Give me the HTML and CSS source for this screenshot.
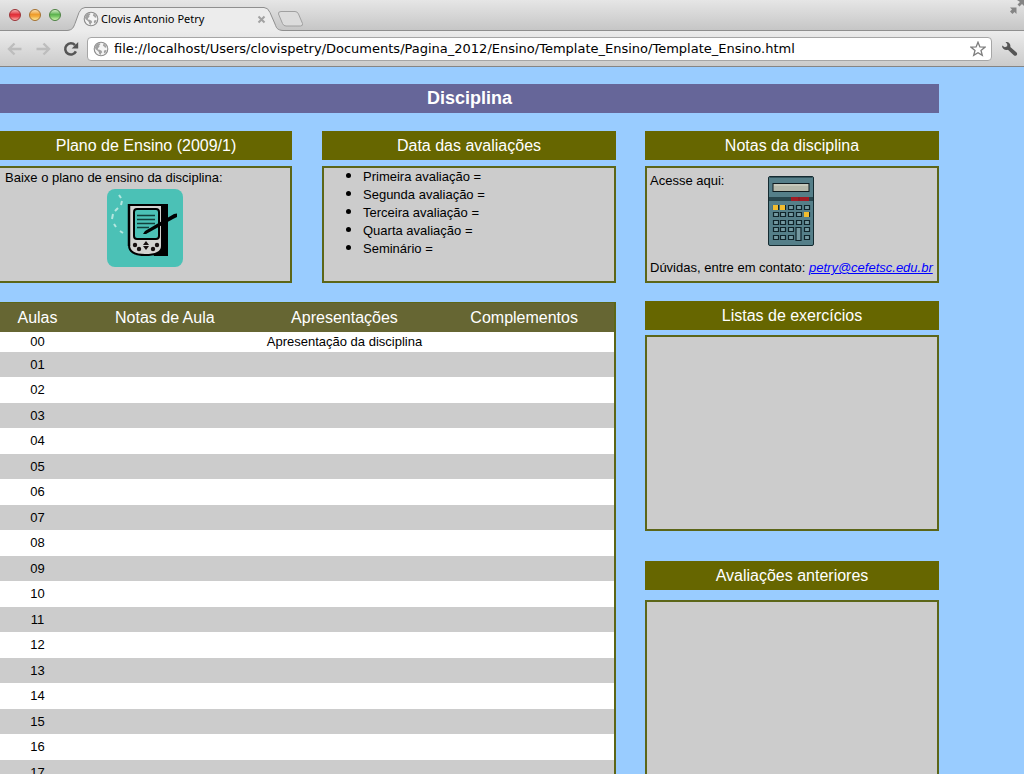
FILE: index.html
```html
<!DOCTYPE html>
<html lang="pt-BR">
<head>
<meta charset="utf-8">
<title>Clovis Antonio Petry</title>
<link rel="stylesheet" href="styles.css">
</head>
<body>
<svg class="defs" aria-hidden="true">
  <symbol id="globe" viewBox="0 0 16 16">
    <circle cx="8" cy="8" r="6.800" fill="#f4f4f4" stroke="#8c8c8c" stroke-width="1.100"/>
    <path d="M3.200 3.800 5.400 2.200l2 .3-.4 1.600-1 .5.500 1.100-1.400 1.200-.3 1.500 1.800.3 2 1 .6 1.500-1.200 1.200-.4 1.700-1.300-1.200-.5-2-1.500-1.300-1.800-1.300-.6-2zM9.800 2.400l2 .9 1.700 2.200-.2 1.300-1.500-.2-.6-1.200-1.400-.7.600-1zM11.400 9.200l2.300-.3-1 2.500-1.600 1.200-.3-1.800z" fill="#a2a2a2"/>
  </symbol>
</svg>
<div class="window">
  <header class="browser">
    <div class="tabstrip">
      <div class="lights">
        <button class="light red" aria-label="Fechar"></button>
        <button class="light amber" aria-label="Minimizar"></button>
        <button class="light green" aria-label="Ampliar"></button>
      </div>
      <div class="tab">
        <svg class="tab-shape" viewBox="0 0 216 24" aria-hidden="true"><path d="M0 23.500C6 23 6.500 20 8 16.500L12 5.500Q14 .5 18 .5H197Q201 .5 203 5.500L208 17C209.500 21 210 23 216 23.500V24H0z" fill="#ececec"/><path d="M0 23.500C6 23 6.500 20 8 16.500L12 5.500Q14 .5 18 .5H197Q201 .5 203 5.500L208 17C209.500 21 210 23 216 23.500" fill="none" stroke="#8f8f8f"/></svg>
        <svg class="favicon" aria-hidden="true"><use href="#globe"/></svg>
        <span class="tab-title">Clovis Antonio Petry</span>
        <button class="tab-close" aria-label="Fechar aba"><svg width="9" height="9" viewBox="0 0 9 9"><path d="m1.500 1.500 6 6m0-6-6 6" stroke="#a2a2a2" stroke-width="2"/></svg></button>
      </div>
      <button class="new-tab" aria-label="Nova aba"><svg width="28" height="18" viewBox="0 0 28 18"><path d="M4 1.500H18Q20.500 1.500 21.500 4L25.500 13.500Q26 16 23.500 16H9Q6.500 16 5.500 13.500L1.500 4Q1 1.500 4 1.500z" fill="#dcdcdc" stroke="#a0a0a0"/></svg></button>
      <button class="fullscreen" aria-label="Tela cheia"><svg width="15" height="15" viewBox="0 0 15 15"><path d="M8 0h7v6l-2-2-2.500 2.500-2-2L11 2zM1 7.500h6.500V14l-2-2-2 2L1 11.500l2-2z" fill="#858585"/></svg></button>
    </div>
    <div class="toolbar">
      <button class="tool" aria-label="Voltar"><svg width="16" height="14" viewBox="0 0 16 14"><path d="M7.500 1.500 2 7l5.500 5.500M2 7h12.500" fill="none" stroke="#bdbdbd" stroke-width="2.400"/></svg></button>
      <button class="tool" aria-label="Avançar"><svg width="16" height="14" viewBox="0 0 16 14"><path d="M8.500 1.500 14 7l-5.500 5.500M14 7H1.500" fill="none" stroke="#bdbdbd" stroke-width="2.400"/></svg></button>
      <button class="tool" aria-label="Recarregar"><svg width="16" height="16" viewBox="0 0 16 16"><path d="M12 4.200A5.600 5.600 0 1 0 12.900 10.400" fill="none" stroke="#555" stroke-width="2.500"/><path d="M15.200 1v6.500H8.700z" fill="#555"/></svg></button>
      <div class="address">
        <svg class="site" aria-hidden="true"><use href="#globe"/></svg>
        <input class="url" type="text" aria-label="Endereço" value="file://localhost/Users/clovispetry/Documents/Pagina_2012/Ensino/Template_Ensino/Template_Ensino.html">
        <button class="star" aria-label="Favorito"><svg width="16" height="16" viewBox="0 0 16 16"><path d="m8 1.200 1.900 4.700 5 .3-3.900 3.200 1.300 5L8 11.700l-4.300 2.700 1.300-5L1.100 6.200l5-.3z" fill="#fff" stroke="#7d7d7d" stroke-width="1.300"/></svg></button>
      </div>
      <button class="wrench" aria-label="Ferramentas"><svg width="17" height="16" viewBox="0 0 17 16"><path d="M4.500 1C7.800.3 10 3 9.300 6L15.600 11.600C17.200 13.300 14.900 15.800 13.100 14.400L6.900 8.700C4 9.600.9 7.600 1 4.500L3.900 6.200 6.200 5.200 6.200 3z" fill="#555"/></svg></button>
    </div>
  </header>

  <main class="page">
    <h1 class="title">Disciplina</h1>
    <div class="columns">
      <div class="primary">
        <div class="pair">
          <section>
            <h2 class="heading">Plano de Ensino (2009/1)</h2>
            <div class="box plan">
              <p>Baixe o plano de ensino da disciplina:</p>
              <a class="pda" href="#plano" aria-label="Plano de ensino"><svg width="76" height="78" viewBox="0 0 76 78">
                <rect width="76" height="78" rx="8" fill="#4bc1b6"/>
                <path d="M12 6l2 3M15 12l-1 4M11 19l-3 3M6 25l-1 5M7 35l2 3M13 42l3 2" stroke="#b5e6df" stroke-width="2"/>
                <path d="M27 15h34v52H47z" fill="#000"/>
                <path d="M22 16h33v41q0 9-17 9-16 0-16-10z" fill="#d3d3d0" stroke="#000" stroke-width="2"/>
                <path d="M22 15v42" stroke="#000" stroke-width="2.500"/>
                <rect x="27" y="20" width="25" height="30" rx="3" fill="#4bc1b6" stroke="#000" stroke-width="2"/>
                <path d="M30 26.500h18M30 30.500h18M30 34.500h18M30 38.500h12" stroke="#123f3b" stroke-width="1.500"/>
                <path d="M36 45 38 42 67 25l3-.5v3.500L66 30 39 45z" fill="#000"/>
                <g fill="#171010"><circle cx="28" cy="56" r="2.200"/><circle cx="32" cy="60" r="2.200"/><circle cx="46" cy="60" r="2.200"/><circle cx="50" cy="56" r="2.200"/><path d="m39 52 3 4h-6zm0 9 3-4h-6z"/></g>
              </svg></a>
            </div>
          </section>
          <section>
            <h2 class="heading">Data das avaliações</h2>
            <div class="box">
              <ul class="dates">
                <li>Primeira avaliação =</li>
                <li>Segunda avaliação =</li>
                <li>Terceira avaliação =</li>
                <li>Quarta avaliação =</li>
                <li>Seminário =</li>
              </ul>
            </div>
          </section>
        </div>
        <table class="lessons">
          <thead><tr><th class="num">Aulas</th><th>Notas de Aula</th><th>Apresentações</th><th>Complementos</th></tr></thead>
          <tbody>
            <tr class="first"><td>00</td><td></td><td>Apresentação da disciplina</td><td></td></tr>
            <tr><td>01</td><td></td><td></td><td></td></tr>
            <tr><td>02</td><td></td><td></td><td></td></tr>
            <tr><td>03</td><td></td><td></td><td></td></tr>
            <tr><td>04</td><td></td><td></td><td></td></tr>
            <tr><td>05</td><td></td><td></td><td></td></tr>
            <tr><td>06</td><td></td><td></td><td></td></tr>
            <tr><td>07</td><td></td><td></td><td></td></tr>
            <tr><td>08</td><td></td><td></td><td></td></tr>
            <tr><td>09</td><td></td><td></td><td></td></tr>
            <tr><td>10</td><td></td><td></td><td></td></tr>
            <tr><td>11</td><td></td><td></td><td></td></tr>
            <tr><td>12</td><td></td><td></td><td></td></tr>
            <tr><td>13</td><td></td><td></td><td></td></tr>
            <tr><td>14</td><td></td><td></td><td></td></tr>
            <tr><td>15</td><td></td><td></td><td></td></tr>
            <tr><td>16</td><td></td><td></td><td></td></tr>
            <tr><td>17</td><td></td><td></td><td></td></tr>
          </tbody>
        </table>
      </div>
      <aside class="side">
        <section>
          <h2 class="heading">Notas da disciplina</h2>
          <div class="box grades">
            <div class="access">
              <p>Acesse aqui:</p>
              <a class="calc" href="#notas" aria-label="Notas"><svg width="46" height="70" viewBox="0 0 46 70">
                <rect x=".5" y=".5" width="45" height="69" rx="1.500" fill="#557f89" stroke="#142a30"/>
                <path d="M2 1.500h42" stroke="#34545c"/>
                <rect x="5" y="7.500" width="36" height="8" fill="#b5b9ab" stroke="#101c20"/><path d="M6 9h34" stroke="#d7d9cc"/>
                <path d="M1 21h22v4H1z" fill="#28464d"/><path d="M23 21h18v4H23z" fill="#a01c25"/><path d="M31 21v4" stroke="#6d2229"/><path d="M41 21h4v4h-4z" fill="#28464d"/>
                <g fill="#7499a1" stroke="#10242a" stroke-width="1.200">
                  <path d="M5.500 29.500h5v4h-5zM12.500 29.500h5v4h-5zM20.500 29.500h5v4h-5zM28.500 29.500h5v4h-5zM36.500 29.500h5v4h-5z"/>
                  <path d="M5.500 36.500h5v4h-5zM12.500 36.500h5v4h-5zM20.500 36.500h5v4h-5zM28.500 36.500h5v4h-5zM36.500 36.500h5v4h-5z"/>
                  <path d="M5.500 44.500h5v4h-5zM12.500 44.500h5v4h-5zM20.500 44.500h5v4h-5zM28.500 44.500h5v4h-5zM36.500 44.500h5v4h-5z"/>
                  <path d="M5.500 51.500h5v4h-5zM12.500 51.500h5v4h-5zM20.500 51.500h5v4h-5zM28 51.500h5v13h-5zM36.500 51.500h5v4h-5z"/>
                  <path d="M5.500 59.500h5v4h-5zM12.500 59.500h5v4h-5zM20.500 59.500h5v4h-5zM36.500 59.500h5v4h-5z"/>
                </g>
                <path d="M5 29h5v5H5zM12 29h5v5h-5zM36 36h5v5h-5z" fill="#f2bd2e"/>
              </svg></a>
            </div>
            <p>Dúvidas, entre em contato: <a class="mail" href="mailto:petry@cefetsc.edu.br">petry@cefetsc.edu.br</a></p>
          </div>
        </section>
        <section>
          <h2 class="heading">Listas de exercícios</h2>
          <div class="box lists"></div>
        </section>
        <section class="previous">
          <h2 class="heading">Avaliações anteriores</h2>
          <div class="box exams"></div>
        </section>
      </aside>
    </div>
  </main>
</div>
</body>
</html>
```
FILE: styles.css
```css
* { box-sizing: border-box; }
body { margin: 0; background: #99ccff; font-family: "Liberation Sans", Arial, sans-serif; font-size: 13px; line-height: 18px; color: #000; }
h1, h2, p, ul { margin: 0; padding: 0; }
button { margin: 0; padding: 0; border: 0; background: none; }
svg { display: block; }
.defs { display: none; }
.window { display: flex; flex-direction: column; height: 100vh; overflow: hidden; }

.browser { flex: none; font-family: "Noto Sans", "Lucida Grande", sans-serif; }
.tabstrip { display: flex; align-items: flex-start; height: 31px; background: linear-gradient(#e6e6e6, #c6c6c6); border-bottom: 1px solid #8f8f8f; }
.lights { display: flex; gap: 8px; padding: 9px 0 0 9px; width: 67px; }
.light { width: 12px; height: 12px; border-radius: 50%; border: 1px solid #777; }
.red { background: linear-gradient(#f5b0b0, #e0303a 45%, #e8434a 65%, #ffb0ac); border-color: #9b3034; }
.amber { background: linear-gradient(#fbe0b0, #ee9c2c 45%, #f3ae40 65%, #ffeb9a); border-color: #a5702d; }
.green { background: linear-gradient(#d5efc8, #5db350 45%, #79c766 65%, #d0f8ae); border-color: #4b8040; }
.tab { position: relative; display: flex; align-items: center; width: 216px; height: 24px; margin-top: 7px; padding: 0 17px 0 16px; font-size: 11px; }
.tab-shape { position: absolute; left: 0; top: 0; width: 216px; height: 24px; }
.favicon { position: relative; width: 16px; height: 16px; margin-right: 2px; }
.tab-title { position: relative; flex: 1; white-space: nowrap; }
.tab-close { position: relative; }
.new-tab { margin-top: 10px; margin-left: -6px; }
.fullscreen { margin-left: auto; }
.toolbar { display: flex; align-items: center; height: 36px; padding: 0 6px 0 7px; background: linear-gradient(#ececec, #cbcbcb); border-bottom: 1px solid #858585; }
.tool { width: 28px; height: 24px; }
.address { display: flex; flex: 1; align-items: center; height: 24px; padding: 0 5px; margin-left: -4px; background: #fff; border: 1px solid #a6a6a6; border-radius: 4px; }
.site { flex: none; width: 16px; height: 16px; }
.url { flex: 1; min-width: 0; height: 20px; padding: 0; margin-left: 5px; border: 0; outline: 0; background: none; font: 13px "DejaVu Sans", "Lucida Grande", sans-serif; color: #000; }
.wrench { margin-left: 9px; }

.page { padding: 17px 85px 0 0; }
.title { height: 29px; background: #666699; color: #fff; font-size: 18px; line-height: 28px; text-align: center; }
.columns { display: grid; grid-template-columns: minmax(0, 616fr) minmax(0, 294fr); gap: 29px; margin-top: 18px; }
.pair { display: grid; grid-template-columns: 292fr 294fr; gap: 30px; }
.heading { height: 29px; background: #666600; color: #fff; font-size: 16px; font-weight: 400; line-height: 29px; text-align: center; }
.box { height: 117px; margin-top: 6px; border: 2px solid #5c6618; background: #ccc; }
.plan { border-left: 0; padding: 1px 5px; }
.pda { display: block; width: 76px; margin: 2px auto 0; }
.dates { margin-top: -1px; padding-left: 39px; }
.dates ::marker { font-family: "DejaVu Sans", sans-serif; font-size: 16px; }
.dates li { height: 18px; }
.lessons { width: 100%; margin-top: 19px; border-collapse: separate; border-spacing: 0; table-layout: fixed; border-right: 2px solid #5c6618; border-top: 1px solid #5c6618; text-align: center; }
.lessons th { height: 29px; padding: 0; background: #666633; color: #fff; font-size: 16px; font-weight: 400; }
.lessons .num { width: 75px; }
.lessons td { height: 25px; padding: 0; background: #ccc; }
.lessons tr:nth-child(odd) td { height: 26px; background: #fff; }
.lessons .first:nth-child(odd) td { height: 20px; }
.side { display: flex; flex-direction: column; gap: 18px; }
.grades { display: flex; flex-direction: column; justify-content: space-between; padding: 4px 3px; }
.access { display: flex; }
.calc { margin: 4px 0 0 44px; }
.mail { color: #00f; font-style: italic; }
.lists { height: 196px; margin-top: 5px; }
.previous { margin-top: 12px; }
.exams { height: 260px; margin-top: 10px; }
```
